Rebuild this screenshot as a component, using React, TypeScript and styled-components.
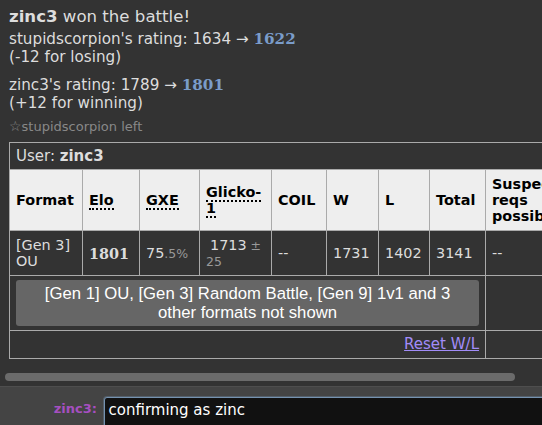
import React from "react";
import styled, { createGlobalStyle } from "styled-components";

const GlobalStyle = createGlobalStyle`
  html, body { margin: 0; padding: 0; background: #333; overflow: hidden; }
  body { font-family: "DejaVu Sans", Verdana, sans-serif; color: #ddd; }
  * { box-sizing: border-box; }
`;

const Page = styled.div`
  width: 542px;
  height: 425px;
  display: flex;
  flex-direction: column;
  overflow: hidden;
`;

const ChatLog = styled.div`
  height: 386px;
  flex: none;
  display: flex;
  flex-direction: column;
  overflow: hidden;
  background: #333;
`;

const Inner = styled.div`
  flex: 1;
  width: 565px;
  padding: 7px 0 0 9px;
  overflow: hidden;
`;

const ScrollTrack = styled.div`
  flex: none;
  height: 18px;
  padding: 5px;
`;

const ScrollThumb = styled.div<{ $width: number }>`
  width: ${(p) => p.$width}px;
  height: 8px;
  border-radius: 4px;
  background: #6b6b6b;
`;

const Winner = styled.div`
  font-size: 16.6px;
  line-height: 20px;
`;

const RatingBlock = styled.div<{ $gap: number }>`
  margin-top: ${(p) => p.$gap}px;
  font-size: 15.2px;
  line-height: 18px;
`;

const NewRating = styled.strong`
  font-family: "DejaVu Serif", serif;
  color: #7a9cc9;
`;

const Notice = styled.div`
  margin-top: 6.5px;
  font-size: 13px;
  line-height: 16px;
  color: #888;
`;

const Star = styled.span`
  font-size: 14px;
  line-height: 14px;
`;

const Ladder = styled.table`
  margin-top: 7.5px;
  border-collapse: collapse;
  table-layout: fixed;
  width: 551px;
  font-size: 14.4px;
  line-height: normal;
`;

const UserHead = styled.th`
  border: 1px solid #aaa;
  padding: 4px 6px;
  text-align: left;
  font-weight: normal;
  font-size: 15px;
  color: #ddd;
  background: #333;
  strong { font-weight: bold; }
`;

const ColHead = styled.th`
  border: 1px solid #aaa;
  padding: 6px 6px;
  text-align: left;
  font-weight: bold;
  color: #000;
  background: #eee;
  vertical-align: middle;
`;

const Abbr = styled.abbr`
  text-decoration: none;
  border-bottom: 2px dotted #000;
  cursor: help;
`;

const Cell = styled.td<{ $indent?: number }>`
  border: 1px solid #aaa;
  padding: 6px 6px 5.5px;
  vertical-align: middle;
  color: #ddd;
  text-indent: ${(p) => p.$indent ?? 0}px;
  small { font-size: 12.5px; line-height: 14px; color: #999; }
`;

const ActionCell = styled.td<{ $right?: boolean }>`
  border: 1px solid #aaa;
  padding: 4px 6px;
  vertical-align: middle;
  text-align: ${(p) => (p.$right ? "right" : "left")};
`;

const EloValue = styled.strong`
  font-family: "DejaVu Serif", serif;
  color: #ddd;
`;

const MoreButton = styled.button`
  display: block;
  width: 100%;
  background: #666;
  border: none;
  border-radius: 3px;
  color: #fff;
  font-family: "Liberation Sans", Arial, sans-serif;
  font-size: 16.7px;
  line-height: 19.2px;
  padding: 4px 14px;
  text-align: center;
  cursor: pointer;
`;

const ResetLink = styled.a`
  font-size: 15px;
  line-height: 19px;
  color: #a28cf8;
  text-decoration: underline;
`;

const InputBar = styled.div`
  flex: 1;
  display: flex;
  align-items: flex-start;
  gap: 6.5px;
  background: #444;
  border-top: 1px solid #4e4e4e;
  padding-top: 10px;
  overflow: hidden;
`;

const UserLabel = styled.div`
  width: 97px;
  flex: none;
  text-align: right;
  padding-top: 4px;
  font-size: 13px;
  font-weight: bold;
  color: #a64fc0;
`;

const ChatInput = styled.textarea`
  flex: none;
  width: 470px;
  height: 40px;
  background: #111;
  color: #fff;
  border: 1px solid #7592b0;
  border-radius: 3px;
  box-shadow: 0 0 0 1px rgba(117, 146, 176, 0.35);
  padding: 3px 4px;
  font-family: "DejaVu Sans", Verdana, sans-serif;
  font-size: 15px;
  line-height: normal;
  resize: none;
  outline: none;
`;

const colWidths = [73, 57, 60, 72, 55, 52, 51, 56, 75];

export default function App() {
  return (
    <>
      <GlobalStyle />
      <Page>
        <ChatLog>
          <Inner>
            <Winner>
              <strong>zinc3</strong> won the battle!
            </Winner>
            <RatingBlock $gap={3}>
              stupidscorpion's rating: 1634 → <NewRating>1622</NewRating>
              <br />
              (-12 for losing)
            </RatingBlock>
            <RatingBlock $gap={10}>
              zinc3's rating: 1789 → <NewRating>1801</NewRating>
              <br />
              (+12 for winning)
            </RatingBlock>
            <Notice>
              <Star>☆</Star>stupidscorpion left
            </Notice>
            <Ladder>
              <colgroup>
                {colWidths.map((w, i) => (
                  <col key={i} style={{ width: w }} />
                ))}
              </colgroup>
              <thead>
                <tr>
                  <UserHead colSpan={9}>
                    User: <strong>zinc3</strong>
                  </UserHead>
                </tr>
              </thead>
              <tbody>
                <tr>
                  <ColHead>Format</ColHead>
                  <ColHead>
                    <Abbr title="Elo rating">Elo</Abbr>
                  </ColHead>
                  <ColHead>
                    <Abbr title="user's percentage chance of winning a random battle">GXE</Abbr>
                  </ColHead>
                  <ColHead>
                    <Abbr title="Glicko-1 rating system">Glicko-1</Abbr>
                  </ColHead>
                  <ColHead>COIL</ColHead>
                  <ColHead>W</ColHead>
                  <ColHead>L</ColHead>
                  <ColHead>Total</ColHead>
                  <ColHead>Suspect reqs possible</ColHead>
                </tr>
                <tr>
                  <Cell>[Gen 3] OU</Cell>
                  <Cell>
                    <EloValue>1801</EloValue>
                  </Cell>
                  <Cell>
                    75<small>.5%</small>
                  </Cell>
                  <Cell $indent={4}>
                    1713<small> ± 25</small>
                  </Cell>
                  <Cell>--</Cell>
                  <Cell>1731</Cell>
                  <Cell>1402</Cell>
                  <Cell>3141</Cell>
                  <Cell>--</Cell>
                </tr>
                <tr>
                  <ActionCell colSpan={8}>
                    <MoreButton>
                      [Gen 1] OU, [Gen 3] Random Battle, [Gen 9] 1v1 and 3 other formats not shown
                    </MoreButton>
                  </ActionCell>
                  <ActionCell />
                </tr>
                <tr>
                  <ActionCell colSpan={8} $right>
                    <ResetLink href="#">Reset W/L</ResetLink>
                  </ActionCell>
                  <ActionCell />
                </tr>
              </tbody>
            </Ladder>
          </Inner>
          <ScrollTrack>
            <ScrollThumb $width={510} />
          </ScrollTrack>
        </ChatLog>
        <InputBar>
          <UserLabel>zinc3:</UserLabel>
          <ChatInput readOnly defaultValue="confirming as zinc" />
        </InputBar>
      </Page>
    </>
  );
}
